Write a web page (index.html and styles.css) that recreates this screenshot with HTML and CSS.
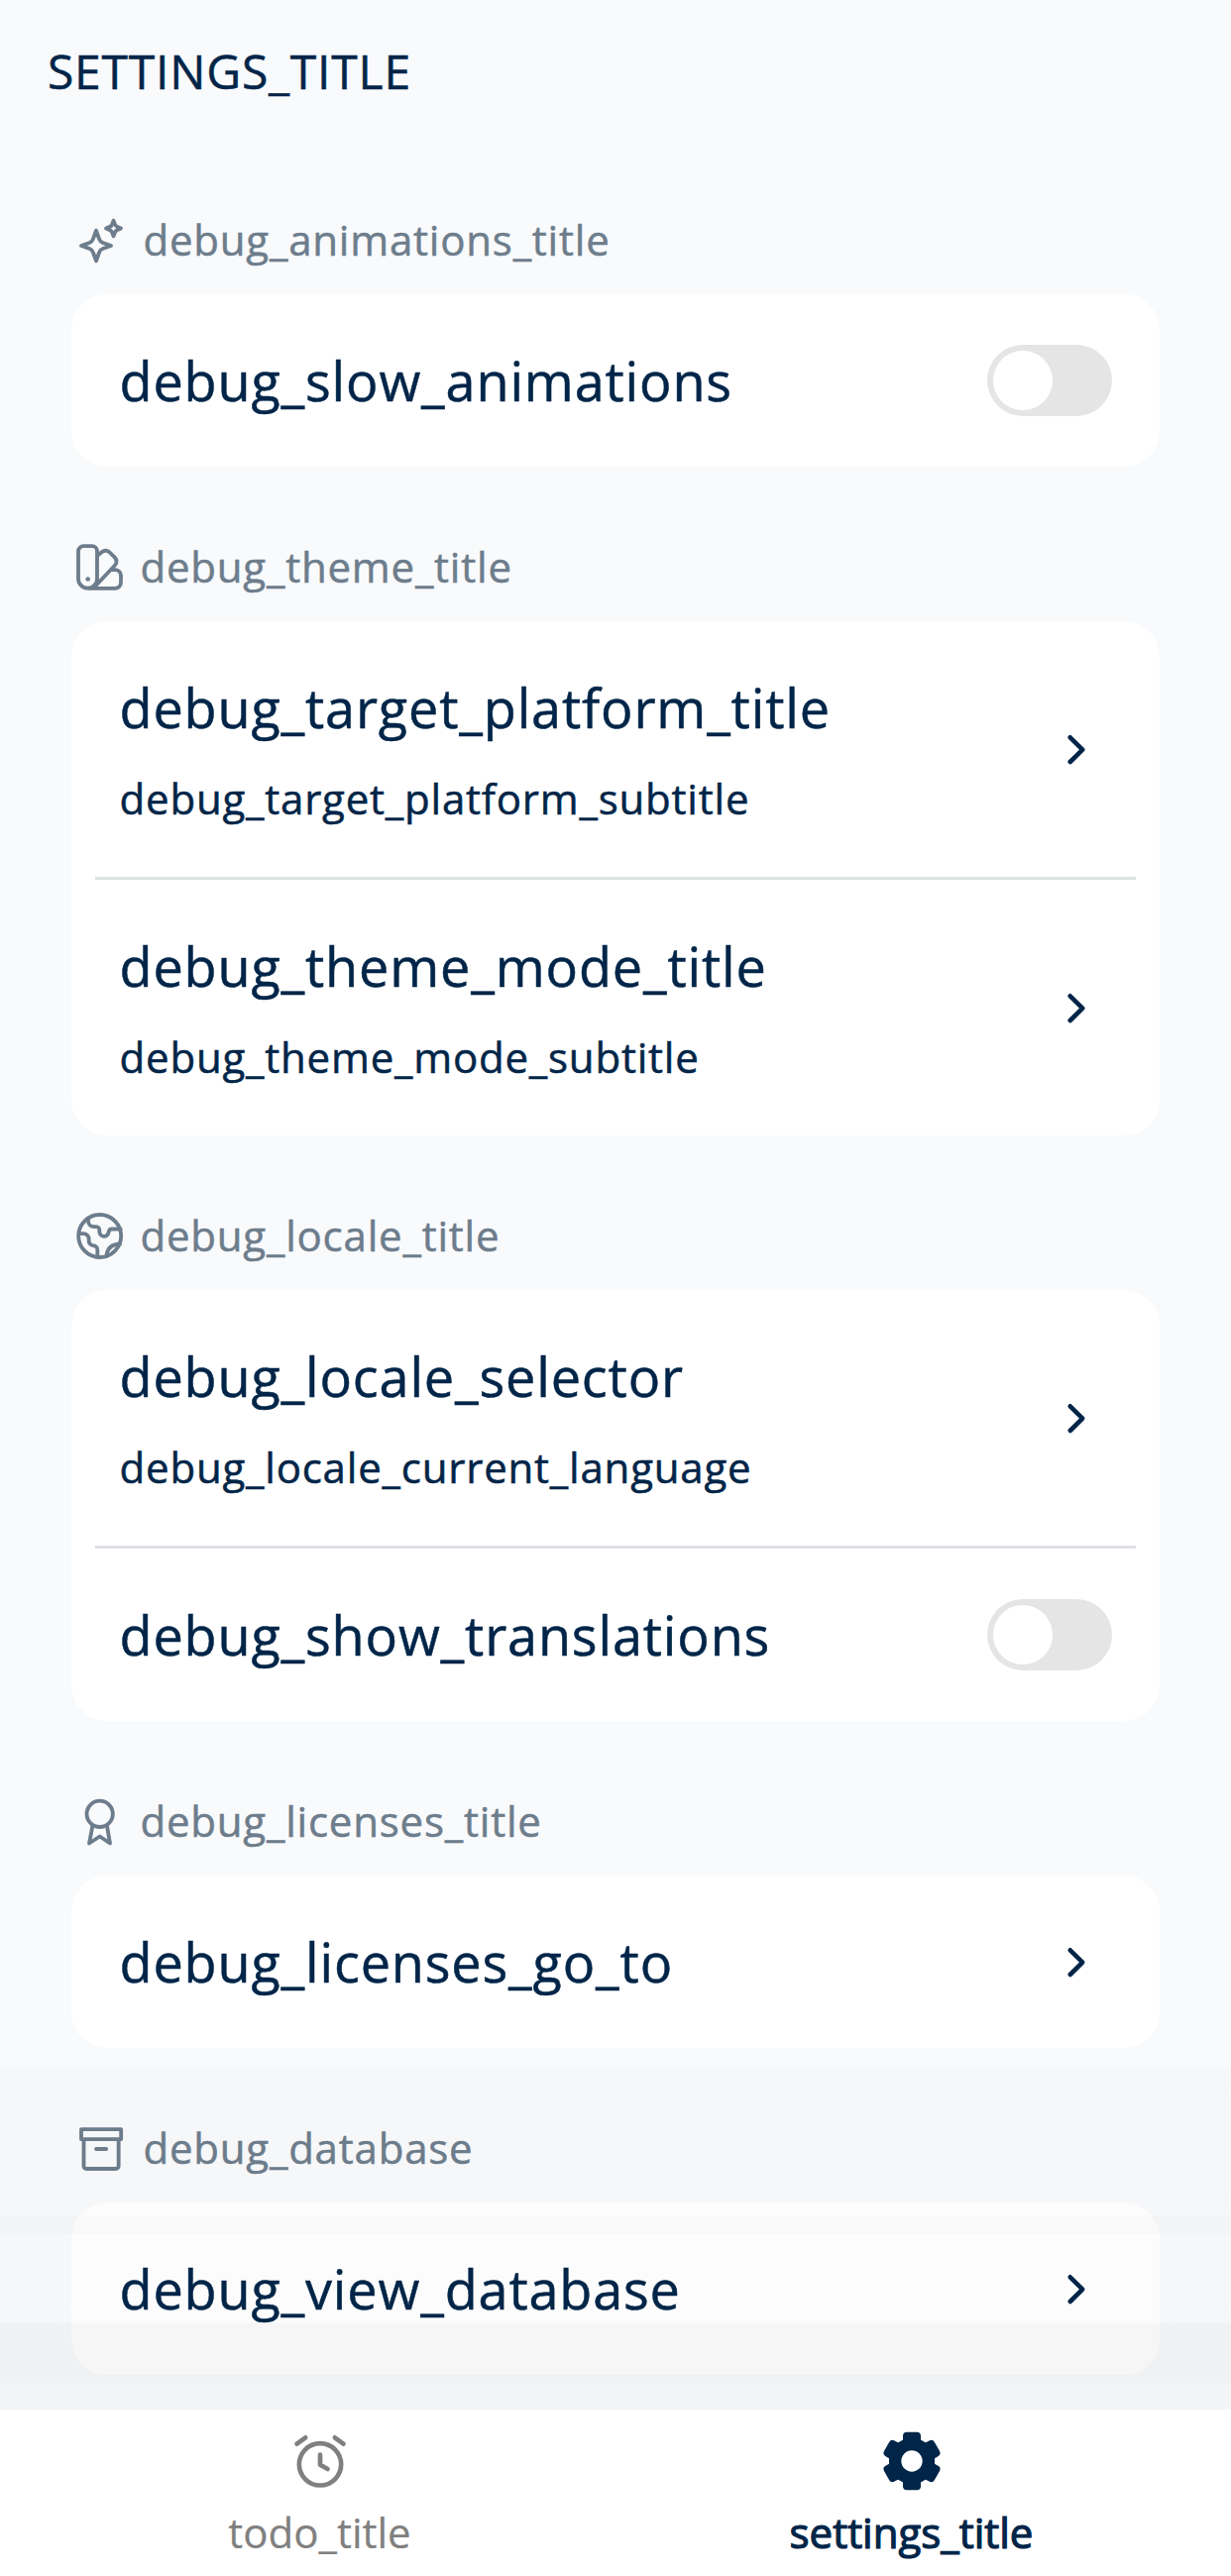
FILE: index.html
```html
<!DOCTYPE html>
<html lang="en">
<head>
<meta charset="utf-8">
<title>settings_title</title>
<link rel="stylesheet" href="styles.css">
</head>
<body>
<div class="screen">
  <header class="app-bar"><h1 class="app-title">SETTINGS_TITLE</h1></header>

  <main class="list">
    <section class="group">
      <h2 class="group-head">
        <svg class="icon" viewBox="45 48 162 162"><path d="M111 98L120 123Q123 132 131 135L156 144L131 153Q123 156 120 165L111 190L102 165Q99 156 91 153L66 144L91 135Q99 132 102 123Z"/><path d="M163.500 68L168 80Q170 85 174 86L186 91.500L174 97Q170 99 168 103L163.500 115L159 103Q157 99 153 97L141 91.500L153 86Q157 85 159 80Z"/></svg>
        <span>debug_animations_title</span>
      </h2>
      <div class="card">
        <div class="row"><span class="row-title">debug_slow_animations</span><span class="switch"></span></div>
      </div>
    </section>

    <section class="group">
      <h2 class="group-head">
        <svg class="icon icon-small" viewBox="45 52.500 153 153"><path d="M74 62h24a16 16 0 0 1 16 16v83a28.500 28.500 0 0 1-57 0V78a16 16 0 0 1 17-16zM116 90L128 80Q140 71 152 81L166 95Q178 108 168 120L106 186M162 134h6a18 18 0 0 1 18 18v20a18 18 0 0 1-18 18H86"/><circle class="solid" cx="86" cy="162" r="7"/></svg>
        <span>debug_theme_title</span>
      </h2>
      <div class="card">
        <div class="row row-tall">
          <div class="row-text"><span class="row-title">debug_target_platform_title</span><span class="row-subtitle">debug_target_platform_subtitle</span></div>
          <svg class="chevron" viewBox="0 0 54 54"><path d="M20.700 15.300L33.200 27.700L20.700 40"/></svg>
        </div>
        <hr class="divider">
        <div class="row row-tall">
          <div class="row-text"><span class="row-title">debug_theme_mode_title</span><span class="row-subtitle">debug_theme_mode_subtitle</span></div>
          <svg class="chevron" viewBox="0 0 54 54"><path d="M20.700 15.300L33.200 27.700L20.700 40"/></svg>
        </div>
      </div>
    </section>

    <section class="group">
      <h2 class="group-head">
        <svg class="icon icon-small" viewBox="45 52.500 153 153"><circle cx="122" cy="126" r="64.500"/><path d="M87 74v7a17 17 0 0 0 17 17h7a10 10 0 0 1 10 10v4a14 14 0 0 0 28 2a10 10 0 0 1 10-9h26M60 119h12a16 16 0 0 1 17 16v5a14 14 0 0 0 13 15a13 13 0 0 1 13 14v21M143 187v-6Q149 151 183 150"/></svg>
        <span>debug_locale_title</span>
      </h2>
      <div class="card">
        <div class="row row-tall">
          <div class="row-text"><span class="row-title">debug_locale_selector</span><span class="row-subtitle">debug_locale_current_language</span></div>
          <svg class="chevron" viewBox="0 0 54 54"><path d="M20.700 15.300L33.200 27.700L20.700 40"/></svg>
        </div>
        <hr class="divider">
        <div class="row"><span class="row-title">debug_show_translations</span><span class="switch"></span></div>
      </div>
    </section>

    <section class="group">
      <h2 class="group-head">
        <svg class="icon icon-small" viewBox="45 55.500 153 153"><circle cx="122" cy="106" r="39.500"/><path d="M100 143L90 195L122 174L153 195L144 143"/></svg>
        <span>debug_licenses_title</span>
      </h2>
      <div class="card">
        <div class="row"><span class="row-title">debug_licenses_go_to</span>
          <svg class="chevron" viewBox="0 0 54 54"><path d="M20.700 15.300L33.200 27.700L20.700 40"/></svg>
        </div>
      </div>
    </section>

    <section class="group">
      <h2 class="group-head">
        <svg class="icon" viewBox="45 51 162 162"><path d="M66 72.500H186.500V102.500H66ZM73.500 104V184a8 8 0 0 0 8 8H171a8 8 0 0 0 8-8V104M111 132H141.500"/></svg>
        <span>debug_database</span>
      </h2>
      <div class="card">
        <div class="row"><span class="row-title">debug_view_database</span>
          <svg class="chevron" viewBox="0 0 54 54"><path d="M20.700 15.300L33.200 27.700L20.700 40"/></svg>
        </div>
      </div>
    </section>
  </main>

  <div class="shade"></div>

  <nav class="tabs">
    <a class="tab">
      <svg class="tab-icon" viewBox="268.500 93 198 198"><circle cx="367.500" cy="202" r="63.500"/><path d="M367.500 173V203L390 216M297 140L323 121M412 121L438 140"/></svg>
      <span>todo_title</span>
    </a>
    <a class="tab tab-active">
      <svg class="tab-icon gear" viewBox="-99 -99 198 198">
        <defs><path id="tooth" d="M-27 0V-76Q-27 -88 -15 -88H15Q27 -88 27 -76V0Z"/></defs>
        <path d="M69 0L69 -14L48 -58L41 -56L28 -64H-28L-41 -56L-48 -58L-69 -14V14L-48 58L-41 56L-28 64H28L41 56L48 58L69 14Z"/>
        <use href="#tooth"/><use href="#tooth" transform="rotate(60)"/><use href="#tooth" transform="rotate(120)"/><use href="#tooth" transform="rotate(180)"/><use href="#tooth" transform="rotate(240)"/><use href="#tooth" transform="rotate(300)"/>
        <circle class="gear-hole" r="32"/>
      </svg>
      <span>settings_title</span>
    </a>
  </nav>
</div>
</body>
</html>
```
FILE: styles.css
```css
* { box-sizing: border-box; }

body {
  margin: 0;
  background: #f9fafc;
  color: #002548;
  font-family: "Open Sans", "Noto Sans", sans-serif;
}

.screen {
  position: relative;
  width: 1242px;
  height: 2600px;
  display: flex;
  flex-direction: column;
  overflow: hidden;
}

.app-bar {
  height: 143px;
  padding: 0 48px;
  display: flex;
  align-items: center;
}

/* A thin stroke gives the regular face a medium weight */
.app-title,
.group-head span,
.row-title,
.row-subtitle {
  -webkit-text-stroke: 0.5px currentColor;
}

.app-title {
  margin: 0;
  font-size: 48px;
  font-weight: 400;
  line-height: 66px;
  letter-spacing: 0.8px;
}

.list {
  flex: 1;
  padding: 73px 72px 0;
  display: flex;
  flex-direction: column;
  gap: 75px;
}

.group {
  display: flex;
  flex-direction: column;
  gap: 27px;
}

.group-head {
  margin: 0;
  height: 54px;
  padding-left: 3px;
  display: flex;
  align-items: center;
  gap: 15px;
  color: #6d7d8c;
  font-size: 42px;
  font-weight: 400;
  line-height: 54px;
  letter-spacing: 0.8px;
}

.group-head span { padding: 0 0 2px 0.4px; }

.icon {
  width: 54px;
  height: 54px;
  fill: none;
  stroke: currentColor;
  stroke-width: 11.5;
  stroke-linecap: round;
  stroke-linejoin: round;
}

.icon-small { width: 51px; height: 51px; }

.solid { fill: currentColor; stroke: none; }

.card {
  background: #fff;
  border-radius: 36px;
}

.row {
  height: 174px;
  padding: 0 48px 0 48.5px;
  display: flex;
  align-items: center;
  justify-content: space-between;
}

.row-tall { height: 258px; }

.row-text {
  padding-bottom: 2px;
  display: flex;
  flex-direction: column;
  gap: 26px;
}

.row-title {
  font-size: 54px;
  line-height: 74px;
  letter-spacing: 0.84px;
}

.row-subtitle {
  font-size: 42px;
  line-height: 57px;
  letter-spacing: 0.8px;
}

.divider {
  height: 3px;
  margin: 0 24px;
  border: 0;
  background: #dde1e4;
}

.chevron {
  width: 54px;
  height: 54px;
  margin-right: 9px;
  fill: none;
  stroke: currentColor;
  stroke-width: 4.6;
  stroke-linecap: round;
  stroke-linejoin: round;
}

.switch {
  width: 126px;
  height: 72px;
  padding: 6px;
  border-radius: 36px;
  background: #e5e5e5;
}

.switch::before {
  content: "";
  display: block;
  width: 60px;
  height: 60px;
  border-radius: 50%;
  background: #fff;
}

/* Stepped shadow above the tab bar */
.shade {
  position: absolute;
  left: 0;
  right: 0;
  bottom: 168px;
  height: 345px;
  background: linear-gradient(
    rgba(0, 0, 0, 0.012) 0 150px,
    rgba(0, 0, 0, 0.024) 150px 168px,
    rgba(0, 0, 0, 0.012) 168px 258px,
    rgba(0, 0, 0, 0.035) 258px 318px,
    rgba(0, 0, 0, 0.024) 318px 345px
  );
}

.tabs {
  height: 168px;
  padding: 19px 24px 0;
  display: flex;
  background: #fff;
}

.tab {
  flex: 1;
  display: flex;
  flex-direction: column;
  align-items: center;
  gap: 10px;
  color: #808080;
  font-size: 42px;
  line-height: 57px;
  -webkit-text-stroke: 0.2px currentColor;
}

.tab-active {
  color: #002548;
  -webkit-text-stroke: 1.2px currentColor;
}

.tab-icon {
  width: 66px;
  height: 66px;
  fill: none;
  stroke: currentColor;
  stroke-width: 14;
  stroke-linecap: round;
  stroke-linejoin: round;
}

.gear { fill: currentColor; stroke: none; }

.gear-hole { fill: #fff; }
```
